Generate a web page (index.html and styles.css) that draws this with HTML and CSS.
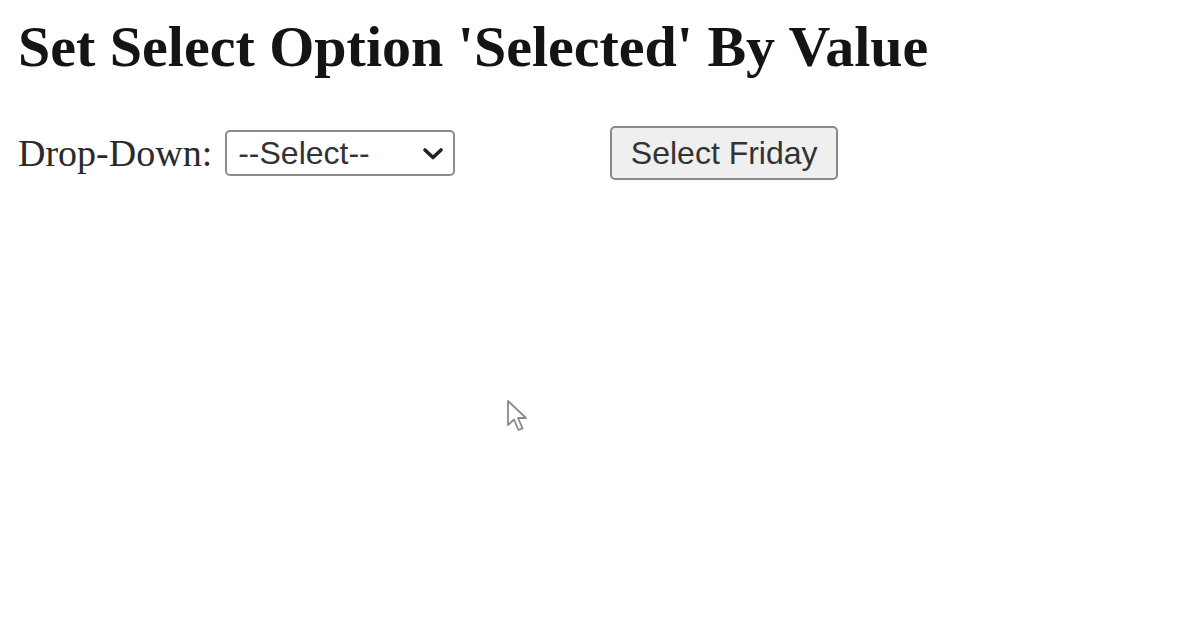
FILE: index.html
```html
<!DOCTYPE html>
<html lang="en">
<head>
<meta charset="utf-8">
<title>Set Select Option 'Selected' By Value</title>
<link rel="stylesheet" href="styles.css">
</head>
<body>
<main class="page">
  <h2 class="title">Set Select Option 'Selected' By Value</h2>
  <div class="row">
    <label class="label" for="days">Drop-Down:</label>
    <div class="select-wrap">
      <select id="days" class="select">
        <option>--Select--</option>
        <option>Monday</option>
        <option>Tuesday</option>
        <option>Wednesday</option>
        <option>Thursday</option>
        <option>Friday</option>
      </select>
      <svg class="chevron" width="22" height="14" viewBox="0 0 22 14" aria-hidden="true">
        <path d="M3 3 L11 10.5 L19 3" fill="none" stroke="#222" stroke-width="3.6" stroke-linecap="round" stroke-linejoin="round"/>
      </svg>
    </div>
    <button class="btn" type="button">Select Friday</button>
  </div>
</main>
<svg class="cursor" width="26" height="36" viewBox="0 0 26 36" aria-hidden="true">
  <path d="M2 2 L2 26 L8 20.5 L12.5 31 L16.5 29.3 L12 19 L20 19 Z" fill="#fff" stroke="#8a8a8a" stroke-width="1.8" stroke-linejoin="round"/>
</svg>
</body>
</html>
```

FILE: styles.css
```css
html, body {
  margin: 0;
  padding: 0;
  background: #ffffff;
}

body {
  font-family: "Liberation Serif", "Times New Roman", serif;
  color: #000;
  position: relative;
  width: 1200px;
  height: 628px;
  overflow: hidden;
}

.page {
  padding: 14px 19px 0 18px;
}

.title {
  margin: 0;
  font-size: 58px;
  line-height: 66px;
  font-weight: bold;
  color: #141414;
}

.row {
  margin-top: 46px;
  display: flex;
  align-items: center;
  height: 54px;
}

.label {
  font-size: 38px;
  line-height: 44px;
  color: #2a2a2a;
  margin-right: 13px;
}

.select-wrap {
  position: relative;
  width: 230px;
  height: 46px;
}

.select {
  appearance: none;
  -webkit-appearance: none;
  box-sizing: border-box;
  width: 230px;
  height: 46px;
  margin: 0;
  padding: 0 0 0 11px;
  border: 2px solid #8c8c8c;
  border-radius: 5px;
  background: #ffffff;
  font-family: "Liberation Sans", Arial, sans-serif;
  font-size: 32px;
  color: #333;
}

.chevron {
  position: absolute;
  right: 11px;
  top: 17px;
  pointer-events: none;
}

.btn {
  box-sizing: border-box;
  margin-left: 155px;
  width: 228px;
  height: 54px;
  padding: 0;
  border: 2px solid #8a8a8a;
  border-radius: 5px;
  background: #efefef;
  font-family: "Liberation Sans", Arial, sans-serif;
  font-size: 32px;
  color: #333;
}

.cursor {
  position: absolute;
  left: 506px;
  top: 399px;
}
```
